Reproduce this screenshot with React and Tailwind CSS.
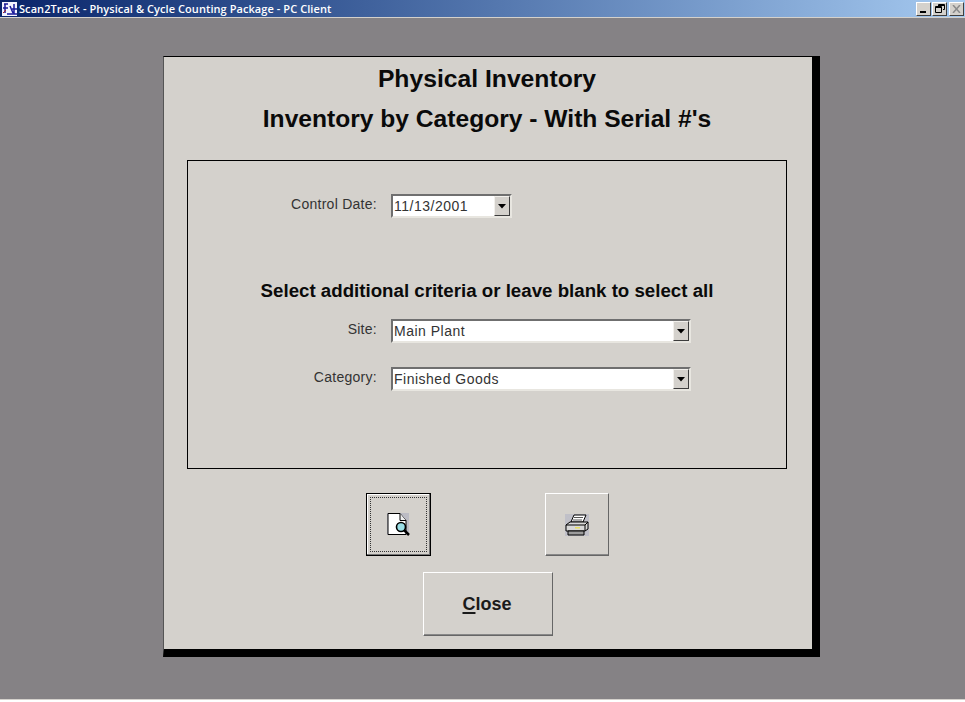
const sans = "font-['Liberation_Sans',Arial,sans-serif]";

function WinButton({ children, className = '' }) {
  return (
    <div className={`w-[15px] h-[14px] bg-[#d4d1cc] border border-t-white border-l-white border-r-[#404040] border-b-[#404040] flex items-center justify-center ${className}`}>
      {children}
    </div>
  );
}

function TitleBar() {
  return (
    <div className="h-[17px] shrink-0 flex items-center justify-between bg-gradient-to-r from-[#0a246a] to-[#a6caf0]">
      <div className="flex items-center">
        <svg width="17" height="16" viewBox="0 0 17 16" className="ml-[1px]">
          <rect x="1" y="1" width="15" height="14" fill="#f4f4ff" />
          <path d="M3 3h4M4 3v9M2 7h5M9 5l3 7M13 3v10M11 8h5M6 13h10" stroke="#1a1a9a" strokeWidth="1.5" fill="none" />
          <path d="M2 12l3-3" stroke="#b02020" strokeWidth="1" />
        </svg>
        <span className="ml-[1px] text-white text-[11px] leading-[17px] font-semibold tracking-[0.07px] whitespace-nowrap font-['Open_Sans',sans-serif]">
          Scan2Track - Physical &amp; Cycle Counting Package - PC Client
        </span>
      </div>
      <div className="flex items-center mr-[1px]">
        <WinButton>
          <div className="w-[6px] h-[2px] bg-black mt-[6px] -ml-[2px]" />
        </WinButton>
        <WinButton className="ml-[1px]">
          <svg width="10" height="9" viewBox="0 0 10 9">
            <path d="M3.5 2V.5h6v5H8M.5 2.5h6v6h-6zM.5 3.5h6M3 1.5h6" stroke="#000" fill="none" />
          </svg>
        </WinButton>
        <WinButton className="ml-[2px]">
          <svg width="9" height="8" viewBox="0 0 9 8">
            <path d="M1 0l7 8M8 0L1 8" stroke="#8a8a8a" strokeWidth="1.5" />
          </svg>
        </WinButton>
      </div>
    </div>
  );
}

function Combo({ value, width }) {
  return (
    <div className={`h-[24px] ${width} bg-white border-2 border-t-[#6f6f6f] border-l-[#6f6f6f] border-r-[#e8e6e0] border-b-[#e8e6e0] flex items-center justify-between`}>
      <span className={`pl-[1px] text-[14px] tracking-[0.5px] text-[#333] whitespace-nowrap ${sans}`}>{value}</span>
      <div className="w-[16px] h-[20px] bg-[#d4d1cc] border border-t-[#f2f0ec] border-l-[#f2f0ec] border-r-[#3c3c3c] border-b-[#3c3c3c] flex items-center justify-center">
        <svg width="8" height="5" viewBox="0 0 8 5">
          <path d="M0 0h8L4 4.5z" fill="#000" />
        </svg>
      </div>
    </div>
  );
}

function Field({ label, value, width, className = '' }) {
  return (
    <div className={`flex items-center ${className}`}>
      <div className={`w-[189px] pb-[3px] text-right text-[14px] tracking-[0.27px] text-[#333] ${sans}`}>{label}</div>
      <div className="ml-[14px]">
        <Combo value={value} width={width} />
      </div>
    </div>
  );
}

function PreviewIcon() {
  return (
    <svg width="23" height="23" viewBox="0 0 23 23">
      <rect x="0" y="0" width="22" height="22" fill="#bcbcc4" />
      <path d="M1 .5h12l6 7v14H1z" fill="#fff" stroke="#000" />
      <path d="M13 .5v7h6" fill="#eee" stroke="#000" />
      <circle cx="14" cy="14" r="4.5" fill="#9adfe6" stroke="#000" strokeWidth="1.6" />
      <path d="M17 17l5 5" stroke="#000" strokeWidth="2.5" />
    </svg>
  );
}

function PrintIcon() {
  return (
    <svg width="24" height="22" viewBox="0 0 24 22">
      <rect x="0" y="0" width="24" height="22" fill="#c0c0c8" />
      <path d="M6 8l3-7h12l-3 7z" fill="#fff" stroke="#000" />
      <path d="M9 3.5h9M8 6h9" stroke="#555" />
      <path d="M1 11l4-3h18v7l-3 2H1z" fill="#d8d8d8" stroke="#000" />
      <path d="M1 11h19v6M20 11l3-3" fill="none" stroke="#000" />
      <path d="M3 17h16v4H3z" fill="#9c9c9c" stroke="#000" />
      <rect x="10" y="13" width="5" height="1.5" fill="#e8e060" />
    </svg>
  );
}

export default function App() {
  return (
    <div className="h-[702px] w-[965px] overflow-hidden flex flex-col bg-white">
      <TitleBar />
      <div className="h-[1px] shrink-0 bg-[#d4d1cc]" />

      <div className="flex-1 bg-[#858285] pt-[38px] pl-[163px]">
        <div className={`w-[657px] h-[601px] bg-[#d4d1cc] border-t border-l border-r-[8px] border-b-[8px] border-t-black border-l-[#555] border-r-black border-b-black ${sans}`}>
          <h1 className="mt-[7px] pr-[2px] text-center text-[24.7px] leading-[30px] font-bold text-[#0a0a0a]">Physical Inventory</h1>
          <h2 className="mt-[10px] pr-[2px] text-center text-[24.6px] leading-[30px] font-bold text-[#0a0a0a]">Inventory by Category - With Serial #'s</h2>

          <div className="mt-[26px] ml-[23px] w-[600px] h-[309px] border border-black pt-[33px]">
            <Field label="Control Date:" value="11/13/2001" width="w-[121px]" />
            <div className="mt-[61px] text-center text-[18.7px] leading-[24px] font-bold text-[#0a0a0a]">
              Select additional criteria or leave blank to select all
            </div>
            <Field label="Site:" value="Main Plant" width="w-[300px]" className="mt-[16px]" />
            <Field label="Category:" value="Finished Goods" width="w-[300px]" className="mt-[24px]" />
          </div>

          <div className="mt-[24px] ml-[202px] flex items-start">
            <button className="w-[65px] h-[63px] bg-[#d4d1cc] border-[1.5px] border-black shadow-[inset_-1px_-1px_0_#777,inset_1px_1px_0_#fff] p-[3px]">
              <div className="w-full h-full border border-dotted border-[#333] flex items-center justify-center">
                <PreviewIcon />
              </div>
            </button>
            <button className="ml-[114px] w-[64px] h-[63px] bg-[#d4d1cc] border border-t-white border-l-white border-r-[#666] border-b-[#666] shadow-[inset_0_-1px_0_#888] flex items-center justify-center">
              <PrintIcon />
            </button>
          </div>

          <button className="block mt-[16px] ml-[259px] w-[130px] h-[64px] pr-[2px] bg-[#d4d1cc] border border-t-white border-l-white border-r-[#666] border-b-[#666] shadow-[inset_0_-1px_0_#888] text-[18px] font-bold text-[#1a1a1a]">
            <span className="underline decoration-2 underline-offset-2">C</span>lose
          </button>
        </div>
      </div>

      <div className="h-[1px] shrink-0 bg-[#d4d1cc]" />
      <div className="h-[2px] shrink-0 bg-white" />
    </div>
  );
}
